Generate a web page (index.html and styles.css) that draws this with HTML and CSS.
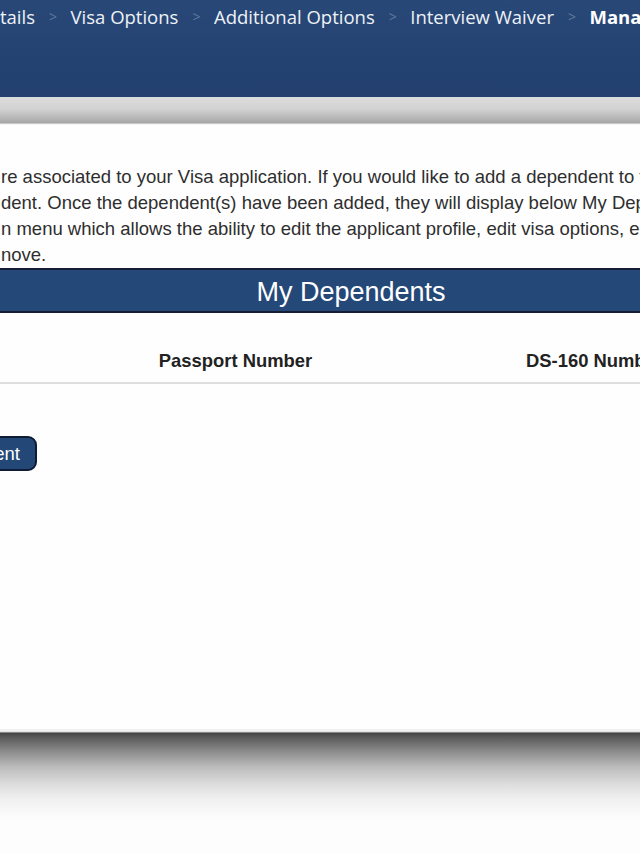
FILE: index.html
```html
<!DOCTYPE html>
<html lang="en">
<head>
<meta charset="utf-8">
<title>Manage Dependents</title>
<link rel="stylesheet" href="styles.css">
</head>
<body>
<div class="viewport">
  <header class="topbar">
    <nav class="crumbs">
      <span class="crumb">tails</span>
      <span class="sep">&gt;</span>
      <span class="crumb">Visa Options</span>
      <span class="sep">&gt;</span>
      <span class="crumb">Additional Options</span>
      <span class="sep">&gt;</span>
      <span class="crumb">Interview Waiver</span>
      <span class="sep">&gt;</span>
      <span class="crumb current">Manage Dependents</span>
    </nav>
  </header>
  <div class="subbar"></div>
  <main class="content">
    <p class="intro"><span class="line">re associated to your Visa application. If you would like to add a dependent to this application</span><span class="line">dent. Once the dependent(s) have been added, they will display below My Dependents.</span><span class="line">n menu which allows the ability to edit the applicant profile, edit visa options, edit</span><span class="line">nove.</span></p>
    <section class="dependents">
      <h2 class="band"><span class="band-title">My Dependents</span></h2>
      <div class="thead">
        <div class="th"></div>
        <div class="th">Passport Number</div>
        <div class="th">DS-160 Number</div>
      </div>
      <div class="actions">
        <button class="btn" type="button">Add Dependent</button>
      </div>
    </section>
  </main>
  <div class="footer-shadow"></div>
</div>
</body>
</html>
```
FILE: styles.css
```css
html, body {
  margin: 0;
  padding: 0;
  background: #fdfdfd;
}
.viewport {
  width: 640px;
  height: 853px;
  overflow: hidden;
  display: flex;
  flex-direction: column;
}
.topbar {
  height: 97px;
  flex: none;
  background: linear-gradient(#284877, #223f6e);
  overflow: hidden;
}
.crumbs {
  display: flex;
  align-items: center;
  white-space: nowrap;
  height: 33px;
  font-family: "Open Sans", "Liberation Sans", sans-serif;
  font-size: 18.5px;
  color: #eef2f7;
}
.crumb.current {
  font-weight: 700;
  color: #ffffff;
}
.sep {
  font-size: 14px;
  color: #62789c;
  margin: 0 13.5px 0 14px;
}
.subbar {
  height: 28px;
  flex: none;
  background: linear-gradient(#d3d9e2 0, #dcdcdc 1px, #d2d2d2 12px, #aaaaaa 25px, #a0a0a0 26px, #f4f4f4 27px);
}
.content {
  height: 604px;
  flex: none;
  background: #fefefe;
  overflow: hidden;
}
.intro {
  margin: 0;
  padding-top: 39px;
  font-family: "Liberation Sans", Arial, sans-serif;
  font-size: 18.5px;
  line-height: 26px;
  color: #2e2e2e;
  white-space: nowrap;
}
.line {
  display: block;
  padding-left: 1px;
}
.band {
  margin: 0;
  height: 41px;
  border-top: 2px solid #161d36;
  border-bottom: 2px solid #161d36;
  background: #244878;
}
.band-title {
  display: block;
  width: 702px;
  padding-top: 3px;
  text-align: center;
  font-family: "Liberation Sans", Arial, sans-serif;
  font-weight: 400;
  font-size: 27px;
  line-height: 38px;
  color: #ffffff;
}
.thead {
  display: grid;
  grid-template-columns: 56px 359px 359px;
  padding-top: 37px;
  padding-bottom: 10px;
  border-bottom: 2px solid #dedede;
  font-family: "Liberation Sans", Arial, sans-serif;
  font-weight: 700;
  font-size: 18.4px;
  line-height: 22px;
  color: #222;
  white-space: nowrap;
}
.th {
  text-align: center;
}
.actions {
  padding-top: 52px;
}
.btn {
  display: block;
  width: 150px;
  height: 35px;
  margin-left: -113px;
  padding: 0 15px 0 0;
  text-align: right;
  border: 2px solid #0f1c36;
  border-radius: 9px;
  background: #234878;
  color: #ffffff;
  font-family: "Liberation Sans", Arial, sans-serif;
  font-size: 18.5px;
}
.footer-shadow {
  flex: 1;
  background: linear-gradient(#f0f0f0 0, #f0f0f0 1px, #fafafa 2px, #d0d0d0 3px, #444 4px, #5a5a5a 8px, #8a8a8a 22px, #bcbcbc 38px, #dedede 56px, #f0f0f0 70px, #f9f9f9 84px, #fdfdfd 90px);
}
```
